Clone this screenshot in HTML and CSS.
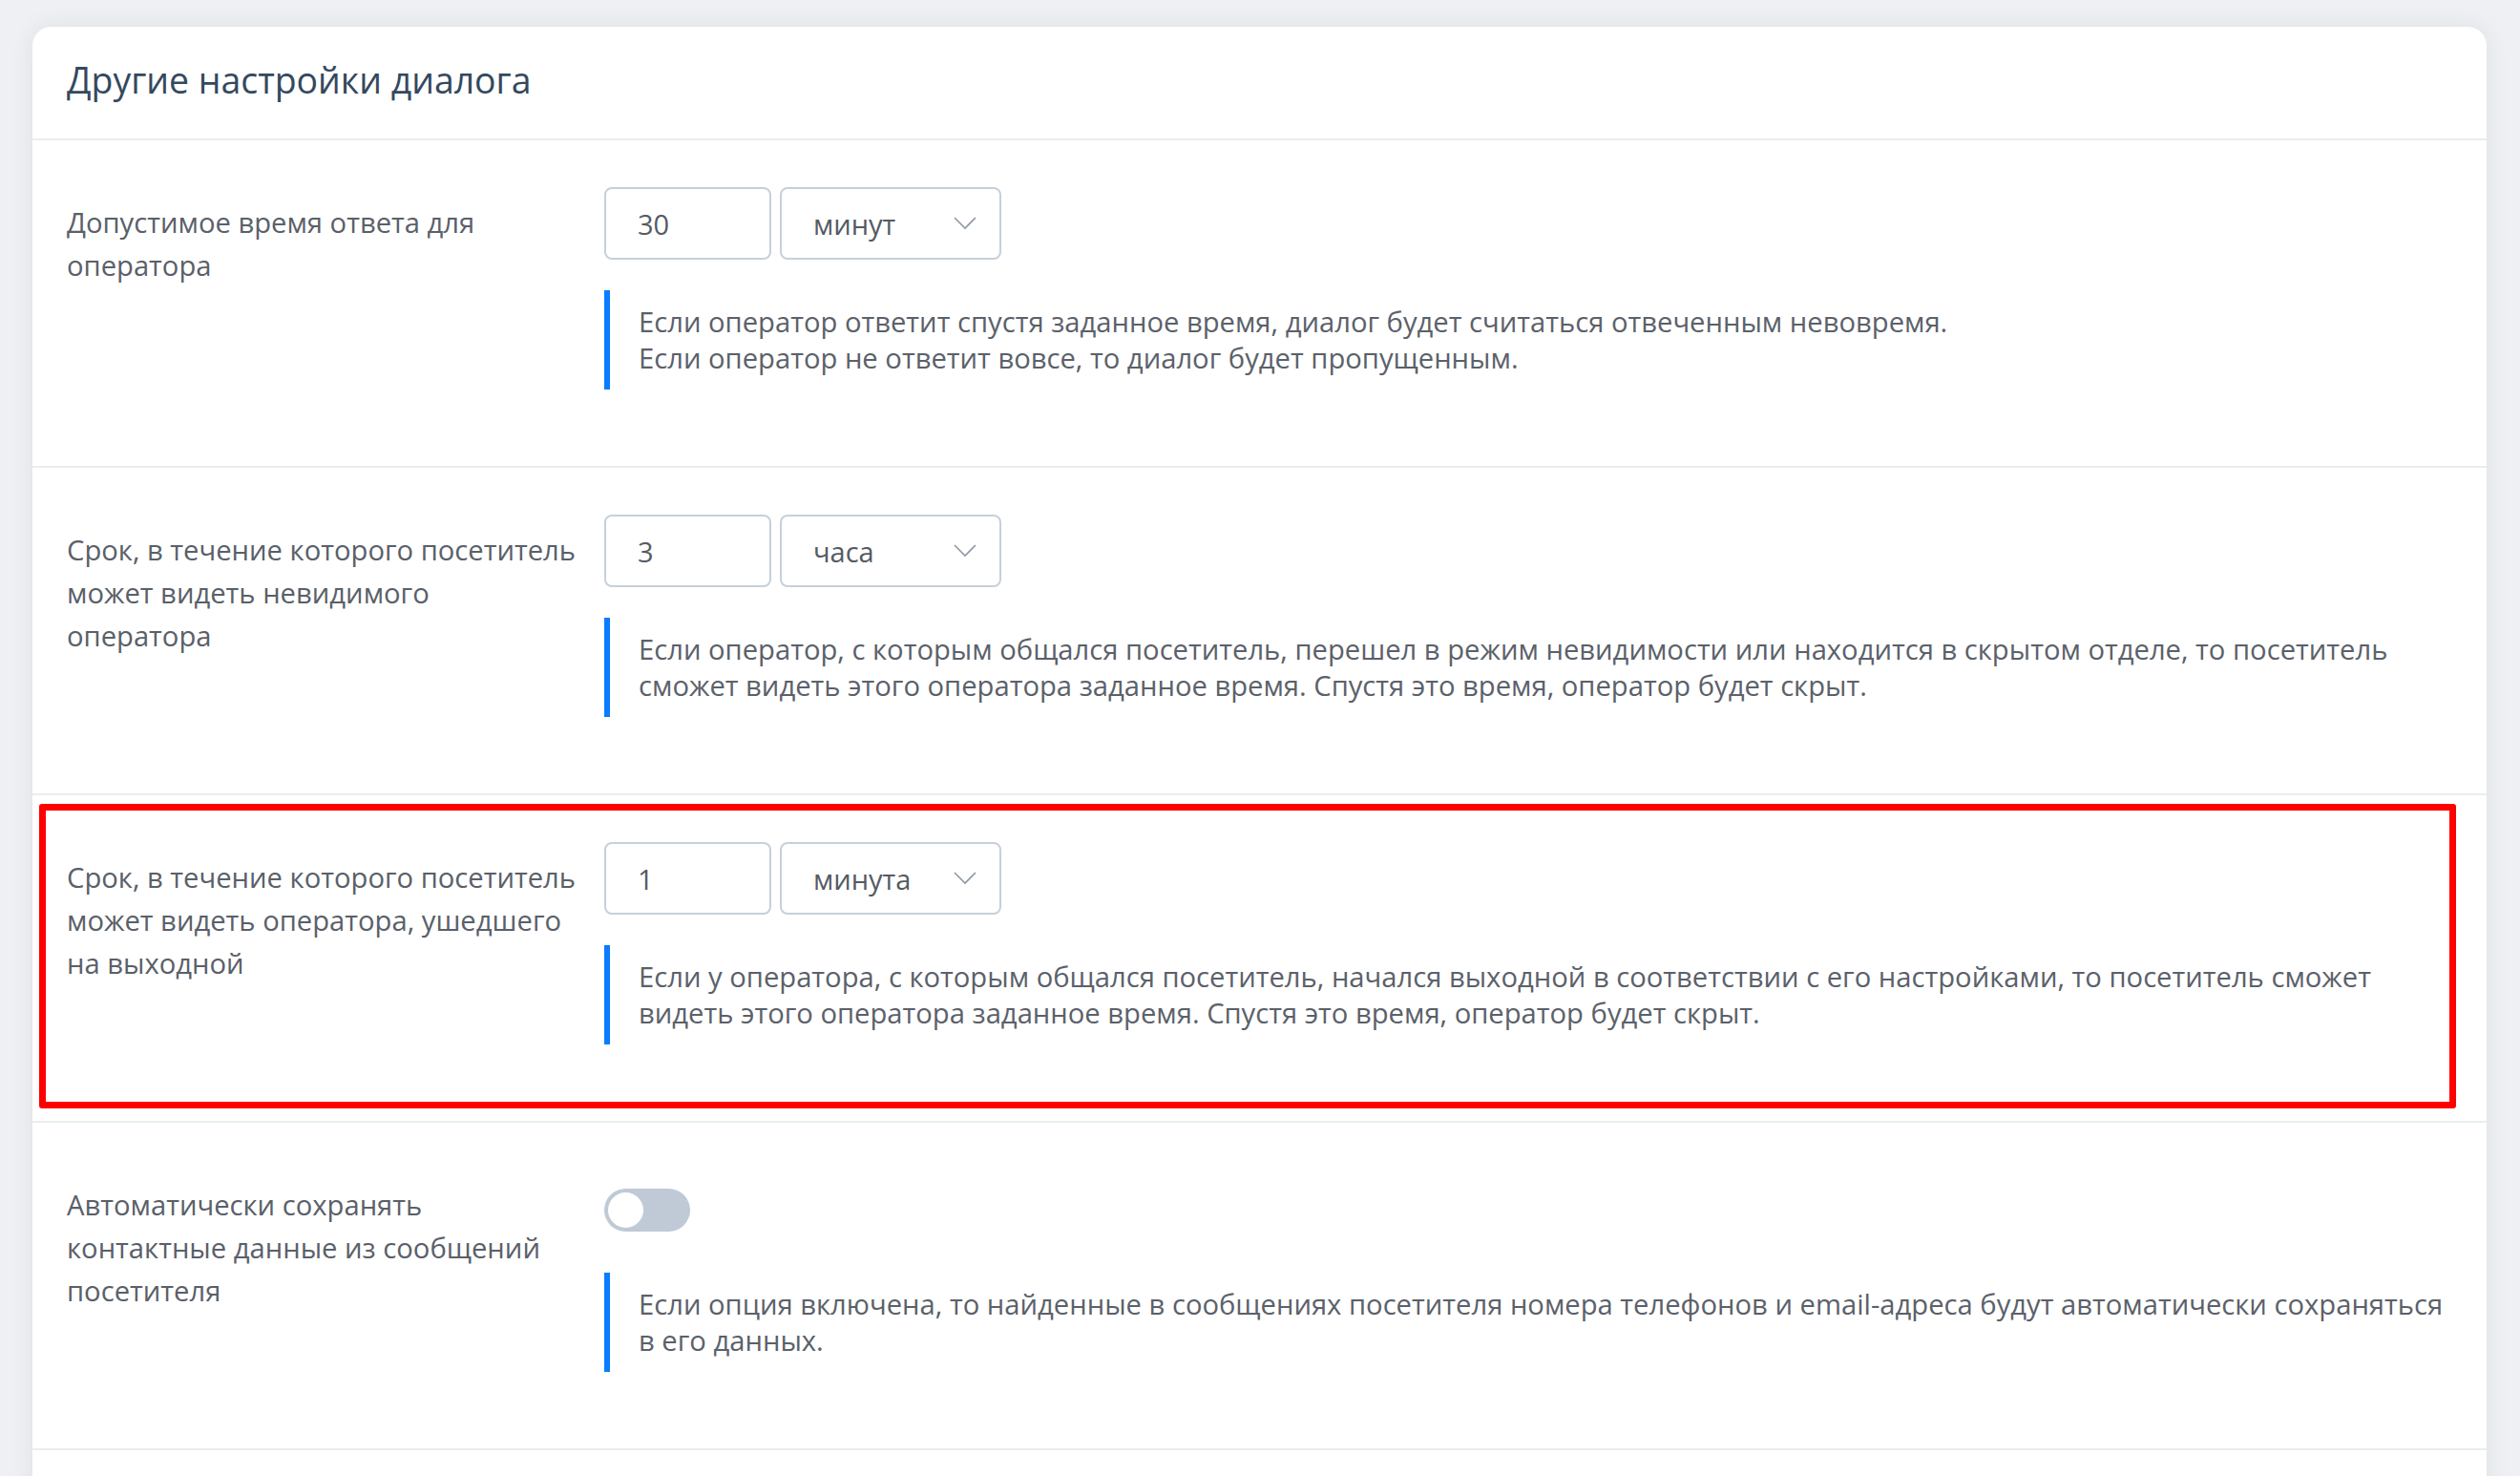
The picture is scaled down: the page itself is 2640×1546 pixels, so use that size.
FILE: index.html
```html
<!DOCTYPE html>
<html lang="ru">
<head>
    <meta charset="UTF-8">
    <meta name="viewport" content="width=device-width, initial-scale=1.0">
    <title>Другие настройки диалога</title>
    <link rel="stylesheet" href="styles.css">
</head>
<body>
    <div class="page">
        <div class="card">
            <h2 class="card-title">Другие настройки диалога</h2>

            <div class="setting-row">
                <div class="setting-label">Допустимое время ответа для оператора</div>
                <div class="setting-body">
                    <div class="controls">
                        <input class="num-input" type="text" value="30">
                        <div class="select-wrap">
                            <select class="unit-select">
                                <option>минут</option>
                                <option>часа</option>
                            </select>
                            <svg class="chevron" viewBox="0 0 24 14"><polyline points="1,1 12,12 23,1"/></svg>
                        </div>
                    </div>
                    <div class="hint">Если оператор ответит спустя заданное время, диалог будет считаться отвеченным невовремя.<br>Если оператор не ответит вовсе, то диалог будет пропущенным.</div>
                </div>
            </div>

            <div class="setting-row">
                <div class="setting-label">Срок, в течение которого посетитель может видеть невидимого оператора</div>
                <div class="setting-body">
                    <div class="controls">
                        <input class="num-input" type="text" value="3">
                        <div class="select-wrap">
                            <select class="unit-select">
                                <option>часа</option>
                                <option>минут</option>
                            </select>
                            <svg class="chevron" viewBox="0 0 24 14"><polyline points="1,1 12,12 23,1"/></svg>
                        </div>
                    </div>
                    <div class="hint">Если оператор, с которым общался посетитель, перешел в режим невидимости или находится в скрытом отделе, то посетитель сможет видеть этого оператора заданное время. Спустя это время, оператор будет скрыт.</div>
                </div>
            </div>

            <div class="setting-row">
                <div class="highlight"></div>
                <div class="setting-label">Срок, в течение которого посетитель может видеть оператора, ушедшего на выходной</div>
                <div class="setting-body">
                    <div class="controls">
                        <input class="num-input" type="text" value="1">
                        <div class="select-wrap">
                            <select class="unit-select">
                                <option>минута</option>
                                <option>часа</option>
                            </select>
                            <svg class="chevron" viewBox="0 0 24 14"><polyline points="1,1 12,12 23,1"/></svg>
                        </div>
                    </div>
                    <div class="hint">Если у оператора, с которым общался посетитель, начался выходной в соответствии с его настройками, то посетитель сможет видеть этого оператора заданное время. Спустя это время, оператор будет скрыт.</div>
                </div>
            </div>

            <div class="setting-row">
                <div class="setting-label">Автоматически сохранять контактные данные из сообщений посетителя</div>
                <div class="setting-body">
                    <div class="controls">
                        <label class="toggle">
                            <input type="checkbox">
                            <span class="toggle-track"></span>
                        </label>
                    </div>
                    <div class="hint">Если опция включена, то найденные в сообщениях посетителя номера телефонов и email-адреса будут автоматически сохраняться в его данных.</div>
                </div>
            </div>
        </div>
    </div>
</body>
</html>
```

FILE: styles.css
```css
body, html {
    margin: 0;
    padding: 0;
    background-color: #eef0f3;
    font-family: "Open Sans", Arial, sans-serif;
    color: #5b6169;
}
.page {
    padding: 28px 35px 0 34px;
    height: 1546px;
    box-sizing: border-box;
    overflow: hidden;
}
.card {
    background-color: #fff;
    border-radius: 20px;
    box-shadow: 0 0 24px rgba(40, 50, 70, 0.08);
    padding: 0 34px 200px 36px;
}
.card-title {
    margin: 0 -34px 0 -36px;
    padding: 35px 36px 40px;
    font-size: 37.4px;
    line-height: 42px;
    font-weight: 400;
    color: #34495e;
    border-bottom: 2px solid #e9edf1;
}
.setting-row {
    position: relative;
    display: grid;
    grid-template-columns: 563px 1fr;
    margin: 0 -34px 0 -36px;
    padding: 49px 34px 80px 36px;
    border-bottom: 2px solid #e9edf1;
}
.setting-label {
    padding: 15px 0 0 0;
    width: 535px;
    font-size: 29.2px;
    line-height: 45px;
    color: #5a6069;
}
.controls {
    display: flex;
    gap: 9px;
    height: 76px;
}
.num-input {
    width: 175px;
    height: 76px;
    box-sizing: border-box;
    border: 2px solid #c6d0db;
    border-radius: 8px;
    padding: 0 33px;
    font-family: inherit;
    font-size: 29px;
    color: #555b63;
    outline: none;
}
.select-wrap {
    position: relative;
    width: 232px;
}
.unit-select {
    appearance: none;
    -webkit-appearance: none;
    width: 100%;
    height: 76px;
    border: 2px solid #c6d0db;
    border-radius: 8px;
    background-color: #fff;
    padding: 0 33px;
    font-family: inherit;
    font-size: 29px;
    color: #555b63;
    outline: none;
}
.chevron {
    position: absolute;
    right: 26px;
    top: 31px;
    width: 24px;
    height: 14px;
    fill: none;
    stroke: #8e99a6;
    stroke-width: 1.6;
    pointer-events: none;
}
.hint {
    margin-top: 32px;
    border-left: 6px solid #0a7cff;
    padding: 14px 0 14px 30px;
    font-size: 29.2px;
    line-height: 38px;
    color: #5b616a;
}
.toggle {
    display: block;
    margin-top: 20px;
    width: 90px;
    height: 45px;
    cursor: pointer;
}
.toggle input {
    display: none;
}
.toggle-track {
    display: block;
    position: relative;
    width: 90px;
    height: 45px;
    border-radius: 23px;
    background-color: #bfcad6;
}
.toggle-track::after {
    content: "";
    position: absolute;
    left: 4px;
    top: 4px;
    width: 37px;
    height: 37px;
    border-radius: 50%;
    background-color: #fff;
}
.highlight {
    position: absolute;
    top: 9px;
    left: 7px;
    right: 32px;
    bottom: 13px;
    border: 7px solid #ff0000;
    border-radius: 3px;
    pointer-events: none;
}
```
